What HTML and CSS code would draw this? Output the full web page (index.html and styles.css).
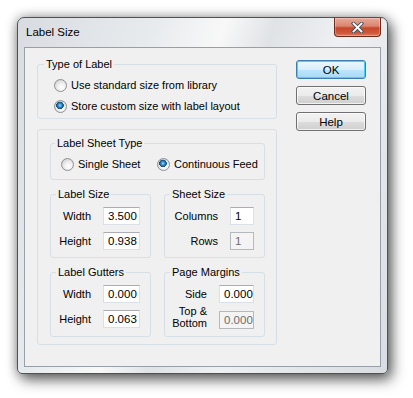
FILE: index.html
```html
<!DOCTYPE html>
<html lang="en">
<head>
  <meta charset="UTF-8" />
  <title>Label Size</title>
  <link rel="stylesheet" href="styles.css">
</head>
<body>
  <div class="window">
    <div class="titlebar">
      <span class="title">Label Size</span>
      <button class="close" aria-label="Close">
        <svg width="13" height="11" viewBox="0 0 13 11">
          <path d="M2.5 1.5 L10.5 9.5 M10.5 1.5 L2.5 9.5" stroke="#3f4a55" stroke-width="3.6" stroke-linecap="square" />
          <path d="M2.5 1.5 L10.5 9.5 M10.5 1.5 L2.5 9.5" stroke="#fff" stroke-width="1.8" stroke-linecap="square" />
        </svg>
      </button>
    </div>

    <div class="client">
      <div class="main">
        <fieldset class="group type-group">
          <legend>Type of Label</legend>
          <label class="radio-row"><input class="radio" type="radio" name="type"> Use standard size from library</label>
          <label class="radio-row"><input class="radio" type="radio" name="type" checked> Store custom size with label layout</label>
        </fieldset>

        <fieldset class="group outer-group">
          <fieldset class="group sheet-type">
            <legend>Label Sheet Type</legend>
            <div class="radio-line">
              <label class="radio-row single"><input class="radio" type="radio" name="sheet"> Single Sheet</label>
              <label class="radio-row"><input class="radio" type="radio" name="sheet" checked> Continuous Feed</label>
            </div>
          </fieldset>

          <div class="pair">
            <fieldset class="group small">
              <legend>Label Size</legend>
              <div class="fields">
                <label>Width</label><input class="num wide" value="3.500">
                <label>Height</label><input class="num wide" value="0.938">
              </div>
            </fieldset>
            <fieldset class="group small">
              <legend>Sheet Size</legend>
              <div class="fields">
                <label>Columns</label><input class="num narrow" value="1">
                <label>Rows</label><input class="num narrow" value="1" disabled>
              </div>
            </fieldset>
          </div>

          <div class="pair">
            <fieldset class="group small">
              <legend>Label Gutters</legend>
              <div class="fields">
                <label>Width</label><input class="num wide" value="0.000">
                <label>Height</label><input class="num wide" value="0.063">
              </div>
            </fieldset>
            <fieldset class="group small">
              <legend>Page Margins</legend>
              <div class="fields">
                <label>Side</label><input class="num mid" value="0.000">
                <label class="two-line">Top &amp;<br>Bottom</label><input class="num mid" value="0.000" disabled>
              </div>
            </fieldset>
          </div>
        </fieldset>
      </div>

      <div class="buttons">
        <button class="btn default">OK</button>
        <button class="btn">Cancel</button>
        <button class="btn">Help</button>
      </div>
    </div>
  </div>
</body>
</html>
```

FILE: styles.css
```css
* {
  box-sizing: border-box;
}

html {
  background: #fff;
}

body {
  margin: 0;
  padding: 17px 0 25px 17px;
  min-height: 398px;
  font-family: "Liberation Sans", Arial, sans-serif;
  font-size: 11px;
  color: #000;
}

.window {
  width: 371px;
  height: 357px;
  padding: 0 6px 6px 6px;
  border: 1px solid #4b5259;
  border-radius: 7px 7px 5px 5px;
  background: linear-gradient(110deg, #d8dce1 0%, #e8ebee 28%, #f8f8f8 42%, #e0e3e6 52%, #eef0f2 66%, #d9dde1 100%);
  box-shadow: 0 0 12px rgba(0, 0, 0, 0.35), 4px 6px 14px rgba(0, 0, 0, 0.55);
}

.titlebar {
  height: 29px;
  display: flex;
  justify-content: space-between;
  align-items: flex-start;
}

.title {
  padding: 7px 0 0 2px;
  line-height: 14px;
  font-size: 11.5px;
}

.close {
  width: 47px;
  height: 19px;
  padding: 0;
  margin: 0;
  border: 1px solid #6e2a1c;
  border-top: none;
  border-radius: 0 0 4px 4px;
  background: linear-gradient(#e9a898 0%, #dc8570 45%, #c8462b 55%, #cf5a3c 85%, #e0826a 100%);
  box-shadow: inset 0 0 0 1px rgba(255, 255, 255, 0.25);
  display: flex;
  align-items: center;
  justify-content: center;
}

.client {
  height: 320px;
  border: 1px solid #97a0a8;
  background: #f0f0f0;
  padding: 9px 0 0 12px;
  display: flex;
  gap: 19px;
}

.main {
  width: 240px;
}

.group {
  margin: 0;
  border: 1px solid #d5dfe5;
  border-radius: 3px;
  min-width: 0;
}

.group legend {
  padding: 0 2px;
  line-height: 14px;
}

.type-group {
  padding: 6px 0 4px 16px;
}

.type-group legend {
  margin-left: -10px;
}

.radio-row {
  display: flex;
  align-items: center;
  gap: 4px;
  height: 16px;
  white-space: nowrap;
}

.type-group .radio-row + .radio-row {
  margin-top: 5px;
}

.radio {
  appearance: none;
  -webkit-appearance: none;
  flex: none;
  width: 13px;
  height: 13px;
  margin: 0;
  border: 1px solid #8e8f8f;
  border-radius: 50%;
  background: radial-gradient(circle at 60% 65%, #ffffff 0, #f2f2f2 35%, #d0d0d0 85%);
}

.radio:checked {
  background:
    radial-gradient(circle at 45% 40%, #a8defa 0, #3d9ad6 1.5px, #1a5f97 3px, #174c78 3.6px, rgba(0, 0, 0, 0) 4px),
    radial-gradient(circle at 60% 65%, #ffffff 0, #f2f2f2 35%, #d0d0d0 85%);
}

.outer-group {
  margin-top: 10px;
  padding: 6px 11px 7px 12px;
}

.sheet-type {
  padding: 6px 0 7px 10px;
}

.sheet-type legend {
  margin-left: -6px;
}

.radio-line {
  display: flex;
}

.radio-line .single {
  width: 96px;
}

.pair {
  margin-top: 7px;
  display: grid;
  grid-template-columns: 101px 101px;
  column-gap: 13px;
}

.small {
  padding: 6px 10px 7px 5px;
}

.fields {
  display: grid;
  grid-template-columns: auto auto;
  justify-content: end;
  column-gap: 12px;
  row-gap: 7px;
  align-items: center;
}

.fields label {
  text-align: right;
}

.fields .two-line {
  line-height: 12px;
  margin-top: -5px;
}

.num {
  height: 18px;
  margin: 0;
  padding: 0 0 0 4px;
  border: 1px solid #dbdfe6;
  border-top-color: #abadb3;
  background: #fff;
  font-family: "Liberation Sans", Arial, sans-serif;
  font-size: 11.5px;
  color: #000;
  outline: none;
}

.num:disabled {
  background: #f4f4f4;
  border-color: #b5b9bc;
  color: #6d6d6d;
}

.wide {
  width: 37px;
}

.mid {
  width: 35px;
}

.narrow {
  width: 24px;
}

.buttons {
  margin-top: 3px;
  width: 70px;
  display: flex;
  flex-direction: column;
  gap: 7px;
}

.btn {
  height: 19px;
  margin: 0;
  padding: 0;
  border: 1px solid #707070;
  border-radius: 3px;
  background: linear-gradient(#f2f2f2 0%, #ebebeb 50%, #dddddd 51%, #cfcfcf 100%);
  box-shadow: inset 0 0 0 1px rgba(255, 255, 255, 0.7);
  font-family: "Liberation Sans", Arial, sans-serif;
  font-size: 11.5px;
  color: #000;
}

.btn.default {
  border-color: #3c7fb1;
  box-shadow: inset 0 0 0 1px #48d1fb;
  background: linear-gradient(#eaf6fd 0%, #d9f0fc 50%, #bee6fd 51%, #a7d9f5 100%);
}
```
